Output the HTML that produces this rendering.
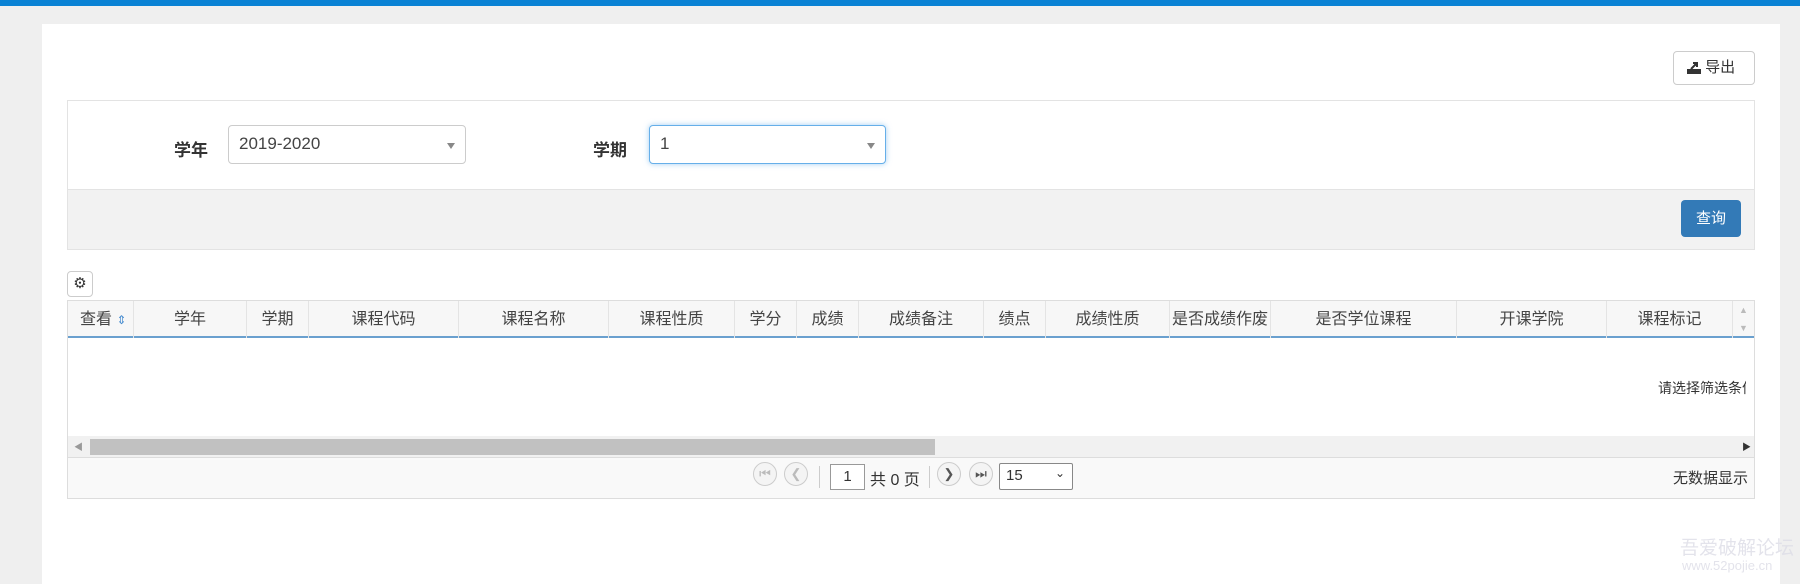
<!DOCTYPE html>
<html><head><meta charset="utf-8"><style>
*{box-sizing:border-box;margin:0;padding:0}
body{width:1800px;height:581px;background:#efefef;font-family:"Liberation Sans","Noto Sans CJK SC",sans-serif;color:#333;position:relative;overflow:hidden}
.a{position:absolute}
.top{left:0;top:0;width:1800px;height:6px;background:#0a82d4}
.panel{left:42px;top:24px;width:1738px;height:560px;background:#fff}
.btn{border:1px solid #ccc;border-radius:4px;background:#fff}
.sel{border:1px solid #ccc;border-radius:4px;background:#fff;font-size:17px;padding:8px 10px;color:#444}
.tri{position:absolute;right:10px;top:17px;border-left:4px solid transparent;border-right:4px solid transparent;border-top:6px solid #888}
.th{position:absolute;top:0;height:37px;line-height:37px;font-size:16px;text-align:center;color:#444;border-right:1px solid #e4e4e4}
.circ{position:absolute;width:24px;height:24px;border-radius:50%;border:1px solid #ccc;background:#f4f4f4;top:8px;color:#bbb;font-size:13px;text-align:center;line-height:22px}
</style></head><body>
<div class="a top"></div>
<div class="a panel"></div>
<div class="a btn" style="left:1673px;top:51px;width:82px;height:34px;font-size:15px;line-height:32px;padding-left:13px">
<svg width="14" height="14" viewBox="0 0 14 14" style="vertical-align:-2px"><path d="M1 13h12v-3H1z M4 9l6-6 M6 3h4v4" stroke="#333" stroke-width="2" fill="#333"/></svg> 导出</div>
<div class="a" style="left:67px;top:100px;width:1688px;height:150px;border:1px solid #e3e3e3;background:#fff"></div>
<div class="a" style="left:68px;top:189px;width:1686px;height:60px;background:#f2f2f2;border-top:1px solid #e3e3e3"></div>
<div class="a" style="left:174px;top:136px;font-size:17px;font-weight:bold">学年</div>
<div class="a sel" style="left:228px;top:125px;width:238px;height:39px">2019-2020<span class="tri"></span></div>
<div class="a" style="left:593px;top:136px;font-size:17px;font-weight:bold">学期</div>
<div class="a sel" style="left:649px;top:125px;width:237px;height:39px;border-color:#66afe9;box-shadow:0 0 6px rgba(102,175,233,.6)">1<span class="tri"></span></div>
<div class="a" style="left:1681px;top:200px;width:60px;height:37px;background:#337ab7;border-radius:4px;color:#fff;font-size:15px;text-align:center;line-height:37px">查询</div>
<div class="a btn" style="left:67px;top:271px;width:26px;height:26px;text-align:center;line-height:24px;font-size:15px">⚙</div>
<div class="a" style="left:67px;top:300px;width:1688px;height:199px;border:1px solid #ddd;background:#fff"></div>
<div class="a" style="left:68px;top:301px;width:1686px;height:37px;background:#f7f7f7;border-bottom:2px solid #6aa0cf">
<div class="th" style="left:0;width:66px;text-align:left;padding-left:12px">查看 <span style="color:#4a8ed0;font-size:12px">⇕</span></div>
<div class="th" style="left:66px;width:113px">学年</div>
<div class="th" style="left:179px;width:62px">学期</div>
<div class="th" style="left:241px;width:150px">课程代码</div>
<div class="th" style="left:391px;width:150px">课程名称</div>
<div class="th" style="left:541px;width:126px">课程性质</div>
<div class="th" style="left:667px;width:62px">学分</div>
<div class="th" style="left:729px;width:62px">成绩</div>
<div class="th" style="left:791px;width:125px">成绩备注</div>
<div class="th" style="left:916px;width:62px">绩点</div>
<div class="th" style="left:978px;width:124px">成绩性质</div>
<div class="th" style="left:1102px;width:101px;overflow:hidden;white-space:nowrap">是否成绩作废</div>
<div class="th" style="left:1203px;width:186px">是否学位课程</div>
<div class="th" style="left:1389px;width:150px">开课学院</div>
<div class="th" style="left:1539px;width:126px">课程标记</div>
<div class="th" style="left:1665px;width:21px;border:none;color:#bbb;font-size:9px;line-height:18px">▲<br>▼</div>
</div>
<div class="a" style="left:1658px;top:378px;width:94px;overflow:hidden;white-space:nowrap;font-size:14px;clip-path:inset(0 6px 0 0)">请选择筛选条件</div>
<div class="a" style="left:68px;top:436px;width:1686px;height:21px;background:#f1f1f1"></div>
<div class="a" style="left:90px;top:439px;width:845px;height:16px;background:#c1c1c1"></div>
<div class="a" style="left:74px;top:440px;font-size:9px;color:#999">◀</div>
<div class="a" style="left:1742px;top:440px;font-size:9px;color:#333">▶</div>
<div class="a" style="left:68px;top:457px;width:1686px;height:41px;background:#f9f9f9;border-top:1px solid #ddd"></div>
<div class="circ" style="left:753px;top:462px">⏮</div>
<div class="circ" style="left:784px;top:462px">❮</div>
<div class="a" style="left:819px;top:466px;width:1px;height:22px;background:#ccc"></div>
<div class="a" style="left:830px;top:464px;width:35px;height:26px;border:1px solid #999;background:#fff;font-size:15px;text-align:center;line-height:24px">1</div>
<div class="a" style="left:870px;top:466px;font-size:16px">共 0 页</div>
<div class="a" style="left:929px;top:466px;width:1px;height:22px;background:#ccc"></div>
<div class="circ" style="left:937px;top:462px;color:#555">❯</div>
<div class="circ" style="left:969px;top:462px;color:#555">⏭</div>
<div class="a" style="left:999px;top:463px;width:74px;height:27px;border:1px solid #888;border-radius:2px;background:#fff;font-size:15px;padding:3px 6px">15<span style="position:absolute;right:7px;top:2px;font-size:12px">⌄</span></div>
<div class="a" style="left:1673px;top:467px;font-size:15px">无数据显示</div>
<div class="a" style="left:1680px;top:533px;font-size:19px;color:rgba(220,220,230,.8)">吾爱破解论坛</div>
<div class="a" style="left:1682px;top:558px;font-size:13px;color:rgba(220,220,230,.8)">www.52pojie.cn</div>
</body></html>
